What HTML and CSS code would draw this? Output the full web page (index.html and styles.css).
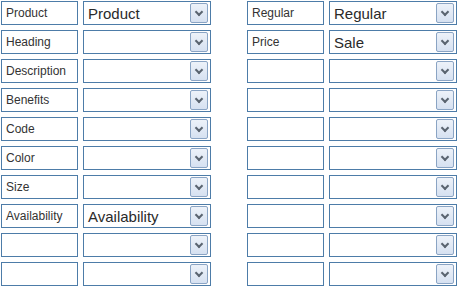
FILE: index.html
```html
<!DOCTYPE html>
<html>
	<head>
		<meta charset="utf-8">
		<title>Field mapping</title>
		<link rel="stylesheet" href="styles.css">
	</head>
	<body>
		<div class="mapper">
			<div class="group">
				<div class="row"><div class="label">Product</div><div class="pick"><span class="value">Product</span><span class="arrow"></span></div></div>
				<div class="row"><div class="label">Heading</div><div class="pick"><span class="value"></span><span class="arrow"></span></div></div>
				<div class="row"><div class="label">Description</div><div class="pick"><span class="value"></span><span class="arrow"></span></div></div>
				<div class="row"><div class="label">Benefits</div><div class="pick"><span class="value"></span><span class="arrow"></span></div></div>
				<div class="row"><div class="label">Code</div><div class="pick"><span class="value"></span><span class="arrow"></span></div></div>
				<div class="row"><div class="label">Color</div><div class="pick"><span class="value"></span><span class="arrow"></span></div></div>
				<div class="row"><div class="label">Size</div><div class="pick"><span class="value"></span><span class="arrow"></span></div></div>
				<div class="row"><div class="label">Availability</div><div class="pick"><span class="value">Availability</span><span class="arrow"></span></div></div>
				<div class="row"><div class="label"></div><div class="pick"><span class="value"></span><span class="arrow"></span></div></div>
				<div class="row"><div class="label"></div><div class="pick"><span class="value"></span><span class="arrow"></span></div></div>
			</div>
			<div class="group">
				<div class="row"><div class="label">Regular</div><div class="pick"><span class="value">Regular</span><span class="arrow"></span></div></div>
				<div class="row"><div class="label">Price</div><div class="pick"><span class="value">Sale</span><span class="arrow"></span></div></div>
				<div class="row"><div class="label"></div><div class="pick"><span class="value"></span><span class="arrow"></span></div></div>
				<div class="row"><div class="label"></div><div class="pick"><span class="value"></span><span class="arrow"></span></div></div>
				<div class="row"><div class="label"></div><div class="pick"><span class="value"></span><span class="arrow"></span></div></div>
				<div class="row"><div class="label"></div><div class="pick"><span class="value"></span><span class="arrow"></span></div></div>
				<div class="row"><div class="label"></div><div class="pick"><span class="value"></span><span class="arrow"></span></div></div>
				<div class="row"><div class="label"></div><div class="pick"><span class="value"></span><span class="arrow"></span></div></div>
				<div class="row"><div class="label"></div><div class="pick"><span class="value"></span><span class="arrow"></span></div></div>
				<div class="row"><div class="label"></div><div class="pick"><span class="value"></span><span class="arrow"></span></div></div>
			</div>
		</div>
	</body>
</html>
```

FILE: styles.css
```css
*{
	margin:0;
	padding:0;
	box-sizing:border-box;
}
body{
	background:#fff;
	font-family:"Liberation Sans", Arial, sans-serif;
	color:#222;
}
.mapper{
	display:flex;
	gap:36px;
	padding:1px 0 0 1px;
}
.group{
	display:flex;
	flex-direction:column;
	gap:5px;
}
.row{
	display:flex;
	gap:5px;
}
.label{
	width:77px;
	height:24px;
	border:1px solid #4d7ca8;
	font-size:12px;
	line-height:22px;
	padding-left:4px;
	color:#333;
	white-space:nowrap;
	overflow:hidden;
}
.pick{
	width:128px;
	height:24px;
	border:1px solid #4d7ca8;
	display:flex;
	align-items:center;
	padding:0 2px 0 4px;
}
.pick .value{
	flex:1;
	font-size:15px;
	color:#2a2a2a;
}
.pick .arrow{
	width:18px;
	height:20px;
	border:1px solid #8aa4c4;
	border-radius:2px;
	background:linear-gradient(#edf2f9, #d6e1f1);
	position:relative;
}
.pick .arrow::after{
	content:"";
	position:absolute;
	left:5px;
	top:5px;
	width:4px;
	height:4px;
	border-right:2px solid #5a6470;
	border-bottom:2px solid #5a6470;
	transform:rotate(45deg);
}
```
